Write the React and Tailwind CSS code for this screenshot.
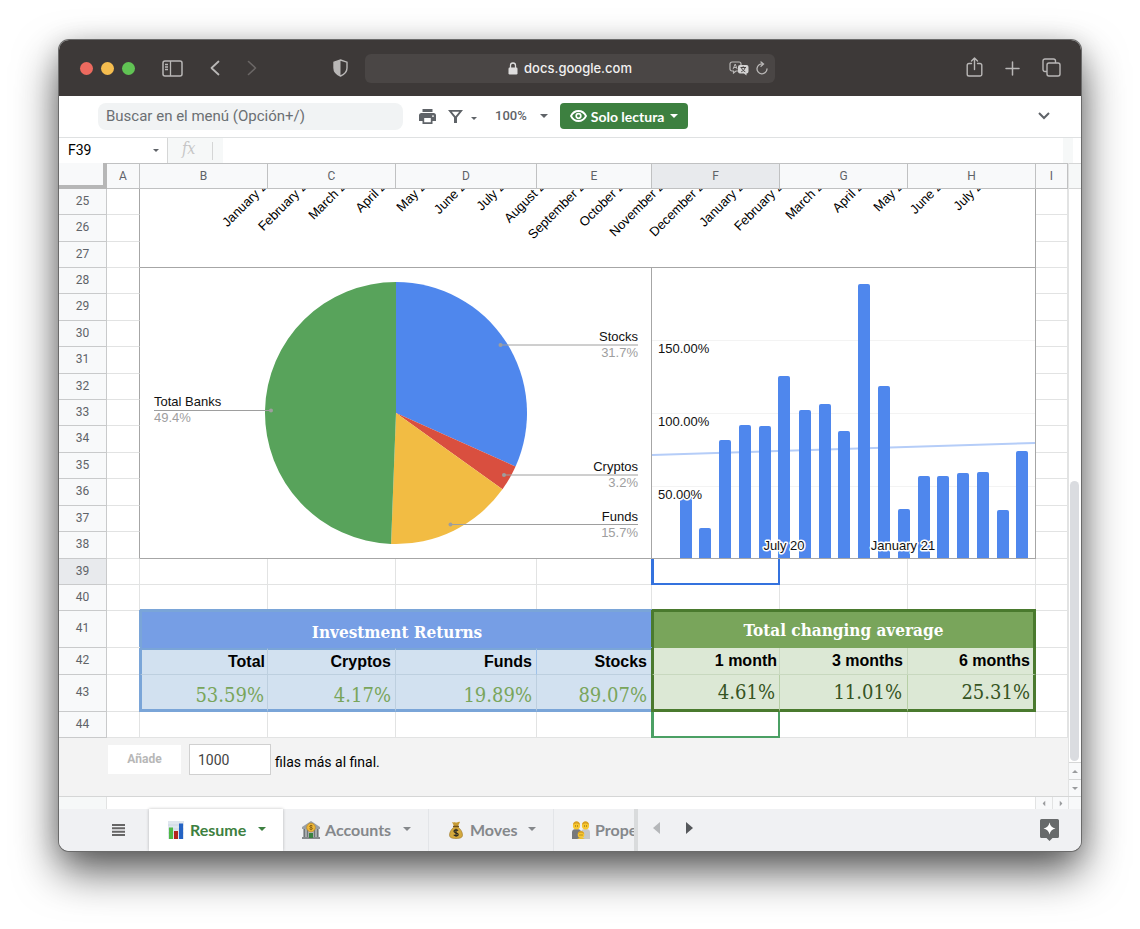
import { useState } from "react";

const months = [
  "January 20",
  "February 20",
  "March 20",
  "April 20",
  "May 20",
  "June 20",
  "July 20",
  "August 20",
  "September 20",
  "October 20",
  "November 20",
  "December 20",
  "January 21",
  "February 21",
  "March 21",
  "April 21",
  "May 21",
  "June 21",
  "July 21",
];

// x and top of every bar, measured from the chart's own corner
const bars = [
  [28, 227],
  [47, 260],
  [67, 172],
  [87, 157],
  [107, 158],
  [126, 108],
  [147, 142],
  [167, 136],
  [186, 163],
  [206, 16],
  [226, 118],
  [246, 241],
  [266, 208],
  [285, 208],
  [305, 205],
  [325, 204],
  [345, 242],
  [364, 183],
];

const slices = [
  { name: "Stocks", value: 31.7, color: "#4f87ed" },
  { name: "Cryptos", value: 3.2, color: "#d94f3f" },
  { name: "Funds", value: 15.7, color: "#f2bc43" },
  { name: "Total Banks", value: 49.4, color: "#58a35b" },
];

const columns = [
  { name: "A", width: "w-[33px]" },
  { name: "B", width: "w-[128px]" },
  { name: "C", width: "w-[128px]" },
  { name: "D", width: "w-[141px]" },
  { name: "E", width: "w-[115px]" },
  { name: "F", width: "w-[128px]" },
  { name: "G", width: "w-[128px]" },
  { name: "H", width: "w-[128px]" },
  { name: "I", width: "w-[32px]" },
];

const cell = "border-r border-b border-[#e2e3e3] p-0";
const serif = "font-['DejaVu_Serif_Condensed','Noto_Serif','DejaVu_Serif',serif]";

const Caret = ({ className }) => (
  <svg viewBox="0 0 10 5" className={className} fill="currentColor" aria-hidden="true">
    <path d="M0 0h10L5 5z" />
  </svg>
);

const TitleBar = () => (
  <header className="flex h-14 items-center bg-[#3d3938] text-[#b9b7b6]">
    <div className="flex w-[306px] shrink-0 items-center pl-[21px]">
      <div className="flex gap-2">
        <button aria-label="Cerrar" className="size-[13px] rounded-full bg-[#ed6a5f]" />
        <button aria-label="Minimizar" className="size-[13px] rounded-full bg-[#f5bd4f]" />
        <button aria-label="Ampliar" className="size-[13px] rounded-full bg-[#61c354]" />
      </div>
      <button aria-label="Barra lateral" className="ml-[27px]">
        <svg viewBox="0 0 21 17" className="h-[17px] w-[21px]" fill="none" stroke="currentColor" strokeWidth="1.5">
          <rect x="1" y="1" width="19" height="15" rx="2" />
          <path d="M8.5 1v15M3 4.5h3M3 7h3M3 9.5h3" strokeWidth="1.3" />
        </svg>
      </button>
      <button aria-label="Atrás" className="ml-[27px]">
        <svg viewBox="0 0 10 16" className="h-4 w-[10px]" fill="none" stroke="currentColor" strokeWidth="1.8" strokeLinecap="round" strokeLinejoin="round">
          <path d="M8.5 1.500L1.500 8l7 6.500" />
        </svg>
      </button>
      <button aria-label="Adelante" className="ml-[27px] text-[#6a6665]">
        <svg viewBox="0 0 10 16" className="h-4 w-[10px]" fill="none" stroke="currentColor" strokeWidth="1.6" strokeLinecap="round" strokeLinejoin="round">
          <path d="M1.5 1.500l7 6.500-7 6.500" />
        </svg>
      </button>
      <button aria-label="Privacidad" className="ml-[76px]">
        <svg viewBox="0 0 15 18" className="h-[18px] w-[15px]">
          <path d="M7.5 1L14 3.200V9c0 4-3 6.500-6.500 8C4 15.500 1 13 1 9V3.200z" fill="none" stroke="currentColor" strokeWidth="1.4" />
          <path d="M7.5 1v16C4 15.500 1 13 1 9V3.200z" fill="currentColor" />
        </svg>
      </button>
    </div>

    <div className="flex h-[29px] min-w-0 flex-1 items-center rounded-md bg-[#4a4645] pr-[7px]">
      <div className="flex flex-1 items-center justify-center gap-[6px] pt-px pl-[46px] font-['Inter',sans-serif] text-[13px] font-medium text-[#f1f0f0]">
        <svg viewBox="0 0 10 13" className="h-[13px] w-[10px]" aria-hidden="true">
          <path d="M2.5 6V3.500a2.500 2.500 0 015 0V6" fill="none" stroke="#dedddd" strokeWidth="1.3" />
          <rect x="0.5" y="5.5" width="9" height="7" rx="1.2" fill="#dedddd" />
        </svg>
        <span className="pt-px">docs.google.com</span>
      </div>
      <button aria-label="Traducir" className="mr-[7px]">
        <svg viewBox="0 0 20 15" className="h-[15px] w-5">
          <path d="M3 1h7a2 2 0 012 2v5a2 2 0 01-2 2H7l-2.500 2V10H3a2 2 0 01-2-2V3a2 2 0 012-2z" fill="none" stroke="currentColor" strokeWidth="1.2" />
          <path d="M4 8.200l2.200-5.200 2 5.200M4.700 6.500h3" fill="none" stroke="currentColor" strokeWidth="1" />
          <path d="M11 4h6.500A2 2 0 0119.500 6v4.500a2 2 0 01-2 2V14.500L15 12.500h-4a2 2 0 01-2-2V6a2 2 0 012-2z" fill="#d4d3d3" />
          <path d="M11.500 6.500h5.500M14.200 5.300v1.200M16 6.800c-.6 2-2 3.200-3.800 4M12.500 6.800c.6 2 2 3.200 3.800 4" fill="none" stroke="#4a4645" strokeWidth="1" />
        </svg>
      </button>
      <button aria-label="Recargar">
        <svg viewBox="0 0 12 14" className="h-[14px] w-3" fill="none" stroke="currentColor" strokeWidth="1.3" strokeLinecap="round">
          <path d="M7 2.900A5 5 0 1011 8M5 1l2.500 2L5 5.200" />
        </svg>
      </button>
    </div>

    <div className="flex w-[306px] shrink-0 items-center justify-end gap-[22px] pr-5">
      <button aria-label="Compartir">
        <svg viewBox="0 0 17 20" className="mb-[3px] h-5 w-[17px]" fill="none" stroke="currentColor" strokeWidth="1.4" strokeLinecap="round" strokeLinejoin="round">
          <path d="M5.500 6.500H3A1.800 1.800 0 001.200 8.300v8.900A1.800 1.800 0 003 19h11a1.800 1.800 0 001.800-1.800V8.300A1.800 1.800 0 0014 6.500h-2.500M8.500 12.500V1.200M5.500 4l3-2.900 3 2.900" />
        </svg>
      </button>
      <button aria-label="Nueva pestaña">
        <svg viewBox="0 0 15 15" className="size-[15px]" stroke="currentColor" strokeWidth="1.5" strokeLinecap="round">
          <path d="M7.500 1v13M1 7.500h13" />
        </svg>
      </button>
      <button aria-label="Ver pestañas">
        <svg viewBox="0 0 19 19" className="mb-[2px] size-[19px]" fill="none" stroke="currentColor" strokeWidth="1.4">
          <rect x="5" y="5" width="13" height="13" rx="2" />
          <path d="M5 13.500H3A2 2 0 011 11.500V3a2 2 0 012-2h8.500a2 2 0 012 2v2" />
        </svg>
      </button>
    </div>
  </header>
);

const Toolbar = () => (
  <div className="flex h-[42px] items-center border-b border-[#dfe1e2] pr-[31px] pb-px pl-[39px] text-[#5f6368]">
    <input
      type="search"
      aria-label="Buscar en el menú"
      placeholder="Buscar en el menú (Opción+/)"
      className="h-[27px] w-[305px] rounded-lg bg-[#f1f3f4] px-2 text-[15px] text-[#5f6368] outline-none placeholder:text-[#6b6f73]"
    />
    <button aria-label="Imprimir" className="ml-4">
      <svg viewBox="0 0 17 15" className="h-[15px] w-[17px]">
        <path d="M3.500 0h10v3h-10zM2.500 4h12A2.500 2.500 0 0117 6.500V12h-3.500v3h-10v-3H0V6.500A2.500 2.500 0 012.500 4zM5.200 9v4.300h6.600V9zM14 6.200a.9.900 0 100 1.800.9.900 0 000-1.800z" fill="currentColor" fillRule="evenodd" />
      </svg>
    </button>
    <button aria-label="Filtro" className="ml-3 flex items-center gap-2">
      <svg viewBox="0 0 15 13" className="h-[13px] w-[15px]">
        <path d="M0 0h15L9 7.500V13H6V7.500zM3.800 1.800l3.700 4.500 3.700-4.500z" fill="currentColor" fillRule="evenodd" />
      </svg>
      <Caret className="mt-1 h-[3px] w-[6px]" />
    </button>
    <button className="ml-[18px] flex items-center gap-[13px] text-[13px] font-medium">
      100%
      <Caret className="h-1 w-2" />
    </button>
    <button className="ml-3 flex h-[26px] w-32 items-center rounded-sm bg-[#3d8040] pl-[10px] font-['Lato',sans-serif] text-[14px] font-bold text-white">
      <svg viewBox="0 0 17 12" className="mr-1 h-3 w-[17px]">
        <path d="M1 6c1.500-3 4.300-5 7.500-5S14.500 3 16 6c-1.500 3-4.300 5-7.500 5S2.500 9 1 6z" fill="none" stroke="currentColor" strokeWidth="1.8" />
        <circle cx="8.5" cy="6" r="2.3" fill="none" stroke="currentColor" strokeWidth="1.7" />
      </svg>
      <span className="whitespace-nowrap">Solo lectura</span>
      <Caret className="ml-[6px] h-1 w-2" />
    </button>
    <button aria-label="Ocultar menús" className="ml-auto">
      <svg viewBox="0 0 12 8" className="h-2 w-3" fill="none" stroke="currentColor" strokeWidth="2">
        <path d="M1 1l5 5 5-5" />
      </svg>
    </button>
  </div>
);

const FormulaBar = () => {
  const [formula, setFormula] = useState("");

  return (
    <div className="flex h-[25px] items-center">
      <input aria-label="Celda" defaultValue="F39" className="w-[94px] pl-[9px] text-[14px] text-black outline-none" />
      <Caret className="h-[3px] w-[6px] text-[#5f6368]" />
      <div className="ml-2 flex h-full w-14 items-center border-l border-[#d5d6d6] bg-[#f6f8f8] pl-[14px] text-[#c6c6c6]">
        <span className="w-[30px] pb-1 font-['DejaVu_Serif_Condensed','DejaVu_Serif',serif] text-[16px] leading-5 italic">fx</span>
        <span className="h-[18px] w-px bg-[#d5d6d6]" />
      </div>
      <input
        aria-label="Fórmula"
        value={formula}
        onChange={(e) => setFormula(e.target.value)}
        className="h-full min-w-0 flex-1 outline-none"
      />
      <div className="mr-2 h-full w-[10px] bg-[#f6f8f8]" />
    </div>
  );
};

const MonthAxis = () => (
  <svg viewBox="0 0 895 78" className="block h-[78px] w-full" fontSize="13" fill="#000">
    {months.map((m, i) => {
      const x = Math.round(133 + i * 39.72);
      return (
        <text key={m} x={x} y={-7} textAnchor="end" transform={`rotate(-45 ${x} -7)`}>
          {m}
        </text>
      );
    })}
  </svg>
);

const point = (share, r) => {
  const a = share * 2 * Math.PI;
  return `${256 + r * Math.sin(a)} ${145 - r * Math.cos(a)}`;
};

const PieChart = () => {
  let start = 0;
  return (
    <svg viewBox="0 0 511 290" className="block h-[290px] w-full" fontSize="13">
      {slices.map((s) => {
        const from = start;
        start += s.value / 100;
        return (
          <path
            key={s.name}
            d={`M256 145L${point(from, 131)}A131 131 0 0 1 ${point(start, 131)}z`}
            fill={s.color}
          />
        );
      })}
      <g stroke="#9e9e9e" fill="#9e9e9e">
        <path d="M360.500 77H498M364 207H498M311 256.500H498M131 142.500H14" />
        <g stroke="none">
          <circle cx="360.5" cy="77" r="2" />
          <circle cx="364" cy="207" r="2" />
          <circle cx="310.5" cy="256.5" r="2" />
          <circle cx="131" cy="142.5" r="2" />
        </g>
      </g>
      <g fill="#111" textAnchor="end">
        <text x="498" y="73">Stocks</text>
        <text x="498" y="203">Cryptos</text>
        <text x="498" y="253">Funds</text>
      </g>
      <g fill="#9e9e9e" textAnchor="end">
        <text x="498" y="89">31.7%</text>
        <text x="498" y="219">3.2%</text>
        <text x="498" y="269">15.7%</text>
      </g>
      <text x="14" y="138" fill="#111">Total Banks</text>
      <text x="14" y="154" fill="#9e9e9e">49.4%</text>
    </svg>
  );
};

const BarChart = () => (
  <svg viewBox="0 0 383 290" className="block h-[290px] w-full" fontSize="13">
    <path d="M0 72.500H383M0 145.500H383M0 218.500H383" stroke="#f3f3f3" />
    <path d="M0 187L383 175" stroke="#b5cdf8" strokeWidth="2" />
    {bars.map(([x, y]) => (
      <path key={x} d={`M${x} 290V${y + 2}q0-2 2-2h8q2 0 2 2V290z`} fill="#4f87ed" />
    ))}
    <g fill="#111" stroke="#fff" strokeWidth="3" strokeLinejoin="round" paintOrder="stroke">
      <text x="6" y="85">150.00%</text>
      <text x="6" y="158">100.00%</text>
      <text x="6" y="231">50.00%</text>
      <text x="132" y="282" textAnchor="middle">July 20</text>
      <text x="251" y="282" textAnchor="middle">January 21</text>
    </g>
  </svg>
);

const RowHead = ({ n, tall }) => (
  <th
    scope="row"
    className={`${tall} border-r border-b border-[#c9cacb] p-0 pb-[2px] text-[12px] leading-4 font-normal text-[#5f6368] ${
      n === 39 ? "bg-[#e8eaed]" : "bg-[#f8f9fa]"
    }`}
  >
    {n}
  </th>
);

const chartRows = [
  [28, "h-[26px]"],
  [29, "h-[27px]"],
  [30, "h-[26px]"],
  [31, "h-[27px]"],
  [32, "h-[26px]"],
  [33, "h-[26px]"],
  [34, "h-[27px]"],
  [35, "h-[26px]"],
  [36, "h-[27px]"],
  [37, "h-[26px]"],
  [38, "h-[27px]"],
];

const chartCell = "border-r border-b border-[#a6a6a6] p-0 font-['Liberation_Sans',Arial,sans-serif]";
const sideCell = "border-r border-b border-r-[#a6a6a6] border-b-[#e2e3e3] p-0";

const EmptyRow = ({ n, selected }) => (
  <tr>
    <RowHead n={n} tall="h-[26px]" />
    {columns.map((c) => (
      <td key={c.name} className={c.name === "F" && selected ? selected : cell} />
    ))}
  </tr>
);

const Sheet = () => (
  <table className="w-full table-fixed border-separate border-spacing-0">
    <thead>
      <tr className="h-[26px] text-[12px] text-[#5f6368]">
        <th className="w-12 border-r-4 border-b-4 border-[#b7b7b7] bg-[#f8f9fa] p-0" />
        {columns.map((c) => (
          <th
            key={c.name}
            scope="col"
            className={`${c.width} border-t border-r border-b border-[#c0c1c2] p-0 font-normal ${
              c.name === "F" ? "bg-[#e8eaed]" : "bg-[#f8f9fa]"
            }`}
          >
            {c.name}
          </th>
        ))}
      </tr>
    </thead>
    <tbody>
      <tr>
        <RowHead n={25} tall="h-[26px]" />
        <td className={sideCell} />
        <td rowSpan={3} colSpan={7} className={chartCell}>
          <MonthAxis />
        </td>
        <td className={cell} />
      </tr>
      <tr>
        <RowHead n={26} tall="h-[27px]" />
        <td className={sideCell} />
        <td className={cell} />
      </tr>
      <tr>
        <RowHead n={27} tall="h-[26px]" />
        <td className={sideCell} />
        <td className={cell} />
      </tr>
      {chartRows.map(([n, tall]) => (
        <tr key={n}>
          <RowHead n={n} tall={tall} />
          <td className={sideCell} />
          {n === 28 && (
            <>
              <td rowSpan={11} colSpan={4} className={chartCell}>
                <PieChart />
              </td>
              <td rowSpan={11} colSpan={3} className={chartCell}>
                <BarChart />
              </td>
            </>
          )}
          <td className={cell} />
        </tr>
      ))}
      <EmptyRow n={39} selected="border-x-2 border-b-2 border-[#3472de] p-0 shadow-[-1px_0_0_#3472de]" />
      <EmptyRow n={40} />
      <tr className={`${serif} text-[17px] leading-6 font-bold text-white`}>
        <RowHead n={41} tall="h-[37px] font-['Roboto',sans-serif]" />
        <td className={cell} />
        <td
          colSpan={4}
          className="border-t border-l-2 border-[#7aa5d8] bg-[#769ee5] p-0 pt-1 text-center shadow-[-1px_-1px_0_#7aa5d8,0_-2px_0_#7aa5d8]"
        >
          Investment Returns
        </td>
        <td
          colSpan={3}
          className="border-t border-r-3 border-l-2 border-[#4a7a2e] bg-[#79a55b] p-0 text-center shadow-[-1px_-1px_0_#4a7a2e,0_-2px_0_#4a7a2e]"
        >
          Total changing average
        </td>
        <td className={cell} />
      </tr>
      <tr className="text-right font-['Liberation_Sans',Arial,sans-serif] text-[16px] leading-5 font-bold text-black">
        <RowHead n={42} tall="h-[27px] text-center font-['Roboto',sans-serif]" />
        <td className={cell} />
        <td className="border-t-2 border-r border-b border-l-2 border-t-[#7aa5d8] border-r-[#bdcfdf] border-b-[#bdcfdf] border-l-[#7aa5d8] bg-[#d2e1f0] p-0 pr-[2px] shadow-[-1px_0_0_#7aa5d8]">Total</td>
        <td className="border-t-2 border-r border-b border-t-[#7aa5d8] border-r-[#bdcfdf] border-b-[#bdcfdf] bg-[#d2e1f0] p-0 pr-1">Cryptos</td>
        <td className="border-t-2 border-r border-b border-t-[#7aa5d8] border-r-[#9fc2ea] border-b-[#bdcfdf] bg-[#d2e1f0] p-0 pr-1">Funds</td>
        <td className="border-t-2 border-b border-t-[#7aa5d8] border-b-[#bdcfdf] bg-[#d2e1f0] p-0 pr-[5px]">Stocks</td>
        <td className="border-r border-b border-l-2 border-r-[#c8d8bf] border-b-[#c8d8bf] border-l-[#4a7a2e] bg-[#dce8d5] p-0 pr-[2px] shadow-[-1px_0_0_#4a7a2e]">1 month</td>
        <td className="border-r border-b border-[#c8d8bf] bg-[#dce8d5] p-0 pr-1">3 months</td>
        <td className="border-r-3 border-b border-r-[#4a7a2e] border-b-[#c8d8bf] bg-[#dce8d5] p-0 pr-[3px]">6 months</td>
        <td className={cell} />
      </tr>
      <tr className={`${serif} text-right text-[20px] leading-6`}>
        <RowHead n={43} tall="h-[37px] text-center font-['Roboto',sans-serif]" />
        <td className={cell} />
        <td className="border-r border-b-3 border-l-2 border-r-[#bdcfdf] border-b-[#7aa5d8] border-l-[#7aa5d8] bg-[#d2e1f0] p-0 pt-[5px] pr-[3px] text-[#79a55b] shadow-[-1px_0_0_#7aa5d8]">53.59%</td>
        <td className="border-r border-b-3 border-r-[#bdcfdf] border-b-[#7aa5d8] bg-[#d2e1f0] p-0 pt-[5px] pr-1 text-[#79a55b]">4.17%</td>
        <td className="border-r border-b-3 border-r-[#bdcfdf] border-b-[#7aa5d8] bg-[#d2e1f0] p-0 pt-[5px] pr-1 text-[#79a55b]">19.89%</td>
        <td className="border-b-3 border-[#7aa5d8] bg-[#d2e1f0] p-0 pt-[5px] pr-[5px] text-[#79a55b]">89.07%</td>
        <td className="border-r border-b-3 border-l-2 border-r-[#b7cfa6] border-b-[#4a7a2e] border-l-[#4a7a2e] bg-[#dce8d5] p-0 pr-1 text-[#365423] shadow-[-1px_0_0_#4a7a2e]">4.61%</td>
        <td className="border-r border-b-3 border-r-[#b7cfa6] border-b-[#4a7a2e] bg-[#dce8d5] p-0 pr-[5px] text-[#365423]">11.01%</td>
        <td className="border-r-3 border-b-3 border-[#4a7a2e] bg-[#dce8d5] p-0 pr-[3px] text-[#365423]">25.31%</td>
        <td className={cell} />
      </tr>
      <EmptyRow n={44} selected="border-x-2 border-b-2 border-[#4ba064] p-0 shadow-[-1px_0_0_#4ba064]" />
    </tbody>
  </table>
);

const AddRows = () => {
  const [count, setCount] = useState("1000");

  return (
    <div className="flex h-[58px] items-start bg-[#f3f3f3] pt-[6px] pl-[49px] text-[14px] text-black">
      <button className="mt-px h-[29px] w-[73px] bg-white pb-px text-[12px] font-bold text-[#b7b7b7]">Añade</button>
      <input
        id="rows"
        value={count}
        onChange={(e) => setCount(e.target.value)}
        className="mr-1 ml-2 h-[31px] w-[82px] border border-[#d0d0d0] bg-white px-2 text-[14px] text-[#444] outline-none"
      />
      <label htmlFor="rows" className="pt-2 leading-5">
        filas más al final.
      </label>
    </div>
  );
};

const ChartIcon = () => (
  <svg viewBox="0 0 16 18" className="h-[18px] w-4">
    <rect width="16" height="18" fill="#dfe6ee" />
    <path d="M0 4h16M0 8h16M0 12h16" stroke="#c3cfdb" strokeWidth=".6" />
    <path d="M1 6.500h4V18H1z" fill="#4fb946" />
    <path d="M6 10h4v8H6z" fill="#b3261e" />
    <path d="M11 2.500h4V18h-4z" fill="#2463c4" />
  </svg>
);

const BankIcon = () => (
  <svg viewBox="0 0 18 18" className="size-[18px]">
    <path d="M0 6l9-6 9 6v2H0z" fill="#9aa0a6" />
    <path d="M1 8h16v9H1z" fill="#b4b8b9" />
    <path d="M2.500 8v8M5.500 8v8M12.500 8v8M15.500 8v8" stroke="#6f7577" strokeWidth="1.4" />
    <path d="M0 16h18v2H0z" fill="#85898b" />
    <path d="M7 12h4v5H7z" fill="#39823f" />
    <circle cx="9" cy="6.5" r="4.3" fill="#efb93a" stroke="#c18a1c" strokeWidth=".7" />
    <path d="M10.600 5c-.5-.8-3-.8-3 .4 0 1.300 3 .8 3 2.100 0 1.200-2.600 1.200-3.200.2M9 3.800v5.500" fill="none" stroke="#80580d" strokeWidth=".8" />
  </svg>
);

const BagIcon = () => (
  <svg viewBox="0 0 14 18" className="h-[18px] w-[14px]">
    <path d="M3 1c1.500 1 2 0 3.500.5S9.500 0 11 1L9 5H5z" fill="#c59a35" />
    <path d="M5 6h4c2.500 2 4.500 5 4.500 8 0 2.500-2 3.500-6.500 3.500S.500 16.500.500 14C.500 11 2.500 8 5 6z" fill="#d4a93d" stroke="#9a7626" strokeWidth=".6" />
    <path d="M4 5.400h6" stroke="#71521a" strokeWidth="1.3" />
    <path d="M9 9.700c-.8-1.200-4-1.100-4 .6 0 2 4.200 1.200 4.200 3.200 0 1.700-3.500 1.800-4.400.3M7 7.700v8" fill="none" stroke="#2e2b22" strokeWidth="1.2" />
  </svg>
);

const FamilyIcon = () => (
  <svg viewBox="0 0 18 18" className="size-[18px]">
    <path d="M0 18v-7q0-3 4.500-3T9 11v7z" fill="#77797b" />
    <path d="M9 18v-7q0-3 4.500-3t4.500 3v7z" fill="#c6c8ca" />
    <circle cx="4.5" cy="4.8" r="3.6" fill="#f8c72f" />
    <circle cx="13.5" cy="4.8" r="3.6" fill="#f8c72f" />
    <path d="M1 4c0-5 7-5 7 0-2-2-5-2-7 0zM10 4c0-5 7-5 7 0-2-2-5-2-7 0z" fill="#d89f20" />
    <path d="M3.200 5h.8M5.200 5H6M12.200 5h.8M14.200 5h.8" stroke="#5b4210" />
    <circle cx="9" cy="13.8" r="3.3" fill="#f8c72f" />
    <path d="M5.800 13c.3-4 6.100-4 6.400 0-2-1.600-4.400-1.600-6.400 0z" fill="#d89f20" />
    <path d="M7.600 14h.8M9.600 14h.8" stroke="#5b4210" />
    <path d="M5 18q4-2.500 8 0z" fill="#e7bf33" />
  </svg>
);

const Tabs = () => (
  <nav className="flex h-[42px] bg-[#f0f1f3] font-['Lato',sans-serif] text-[16px] font-bold text-[#85888b]">
    <button aria-label="Todas las hojas" className="flex w-[90px] shrink-0 items-center pb-px pl-[53px] text-[#666]">
      <svg viewBox="0 0 13 12" className="h-3 w-[13px]" stroke="currentColor" strokeWidth="2">
        <path d="M0 1h13M0 4.300h13M0 7.700h13M0 11h13" />
      </svg>
    </button>
    <button className="flex w-[134px] shrink-0 items-center bg-white pl-[19px] text-[#3d8040] shadow-[0_0_3px_rgba(0,0,0,0.25)]">
      <ChartIcon />
      <span className="w-[74px] pl-[6px] text-left">Resume</span>
      <Caret className="mb-[3px] h-1 w-2" />
    </button>
    <button className="flex w-[146px] shrink-0 items-center border-r border-[#e3e5e8] pl-[19px]">
      <BankIcon />
      <span className="w-[83px] pl-[5px] text-left">Accounts</span>
      <Caret className="mb-[3px] h-1 w-2" />
    </button>
    <button className="flex w-[125px] shrink-0 items-center border-r border-[#e3e5e8] pl-5">
      <BagIcon />
      <span className="w-[65px] pl-[7px] text-left">Moves</span>
      <Caret className="mb-[3px] h-1 w-2" />
    </button>
    <button className="flex w-[84px] shrink-0 items-center overflow-hidden border-r-4 border-[#d9dbdc] pl-[18px]">
      <span className="shrink-0">
        <FamilyIcon />
      </span>
      <span className="pl-[5px]">Properties</span>
    </button>
    <button aria-label="Hojas anteriores" className="ml-[15px] pb-1">
      <svg viewBox="0 0 7 12" className="h-3 w-[7px]" fill="#b5b7b9">
        <path d="M7 0v12L0 6z" />
      </svg>
    </button>
    <button aria-label="Hojas siguientes" className="ml-[26px] pb-1">
      <svg viewBox="0 0 7 12" className="h-3 w-[7px]" fill="#55585b">
        <path d="M0 0v12l7-6z" />
      </svg>
    </button>
    <button aria-label="Explorar" className="mr-[22px] ml-auto">
      <svg viewBox="0 0 19 22" className="h-[22px] w-[19px]">
        <path d="M1.500 0h16A1.500 1.500 0 0119 1.500v16a1.500 1.500 0 01-1.500 1.500H12.500l-3 3-3-3h-5A1.500 1.500 0 010 17.500v-16A1.500 1.500 0 011.500 0z" fill="#676a6b" />
        <path d="M9.500 3.500q1 5 6 6-5 1-6 6-1-5-6-6 5-1 6-6z" fill="#fff" />
      </svg>
    </button>
  </nav>
);

const ScrollBar = () => (
  <div className="flex w-[13px] shrink-0 flex-col border-l border-[#e2e3e3]">
    <div className="h-[26px] border-y border-[#d5d6d6] bg-[#f6f8f8]" />
    <div className="flex flex-1 flex-col justify-end pb-px pl-px">
      <div className="h-[280px] w-[9px] rounded-full bg-[#dadce0]" />
    </div>
    <button aria-label="Subir" className="flex h-[17px] items-center justify-center border-t border-[#d5d6d6] bg-[#f8f9fa]">
      <Caret className="h-[3px] w-[6px] rotate-180 text-[#9a9c9e]" />
    </button>
    <button aria-label="Bajar" className="flex h-[17px] items-center justify-center border-t border-[#d5d6d6] bg-[#f8f9fa]">
      <Caret className="h-[3px] w-[6px] text-[#9a9c9e]" />
    </button>
  </div>
);

const App = () => {
  return (
    <div className="min-h-screen bg-white px-[59px] pt-10 pb-[78px] font-['Roboto',sans-serif]">
      <main className="overflow-hidden rounded-[10px] bg-white shadow-[0_0_0_1px_#6b6b6b,0_20px_44px_rgba(0,0,0,0.65),0_4px_24px_rgba(0,0,0,0.15)]">
        <TitleBar />
        <Toolbar />
        <FormulaBar />
        <div className="flex">
          <div className="min-w-0 flex-1">
            <Sheet />
            <AddRows />
          </div>
          <ScrollBar />
        </div>
        <div className="flex h-[13px] border-t border-[#d5d6d6]">
          <div className="w-12 border-r border-[#e2e3e3] bg-[#f6f8f8]" />
          <div className="flex-1" />
          <button aria-label="Izquierda" className="flex w-[17px] items-center justify-center border-l border-[#e2e3e3] bg-[#f8f9fa]">
            <Caret className="h-[3px] w-[6px] rotate-90 text-[#9a9c9e]" />
          </button>
          <button aria-label="Derecha" className="flex w-[17px] items-center justify-center border-x border-[#e2e3e3] bg-[#f8f9fa]">
            <Caret className="h-[3px] w-[6px] -rotate-90 text-[#9a9c9e]" />
          </button>
          <div className="w-3 bg-[#f8f9fa]" />
        </div>
        <Tabs />
      </main>
    </div>
  );
};

export default App;
